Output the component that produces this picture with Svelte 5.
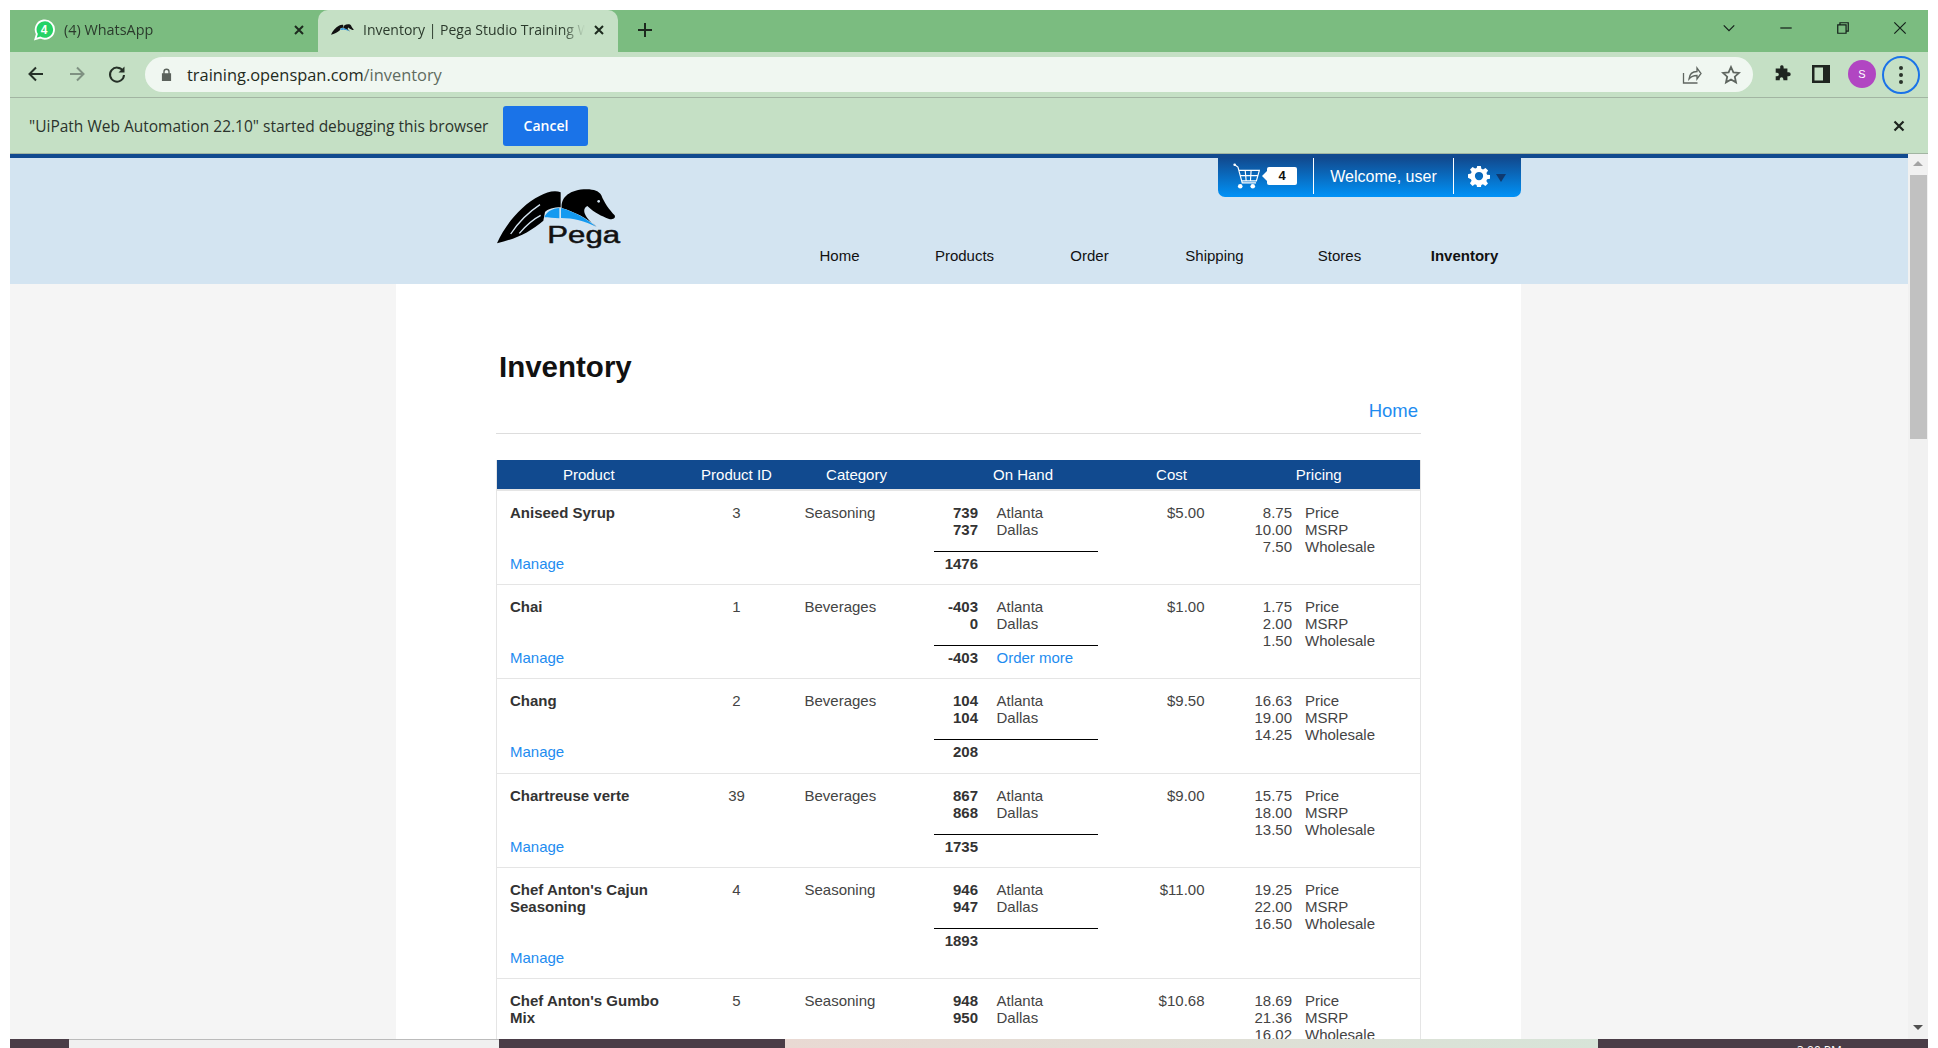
<script>
  const products = [
    { name: 'Aniseed Syrup', id: 3, category: 'Seasoning', atlanta: '739', dallas: '737', total: '1476', cost: '$5.00', price: '8.75', msrp: '10.00', wholesale: '7.50' },
    { name: 'Chai', id: 1, category: 'Beverages', atlanta: '-403', dallas: '0', total: '-403', reorder: true, cost: '$1.00', price: '1.75', msrp: '2.00', wholesale: '1.50' },
    { name: 'Chang', id: 2, category: 'Beverages', atlanta: '104', dallas: '104', total: '208', cost: '$9.50', price: '16.63', msrp: '19.00', wholesale: '14.25' },
    { name: 'Chartreuse verte', id: 39, category: 'Beverages', atlanta: '867', dallas: '868', total: '1735', cost: '$9.00', price: '15.75', msrp: '18.00', wholesale: '13.50' },
    { name: "Chef Anton's Cajun Seasoning", id: 4, category: 'Seasoning', atlanta: '946', dallas: '947', total: '1893', cost: '$11.00', price: '19.25', msrp: '22.00', wholesale: '16.50' },
    { name: "Chef Anton's Gumbo Mix", id: 5, category: 'Seasoning', atlanta: '948', dallas: '950', total: '1898', cost: '$10.68', price: '18.69', msrp: '21.36', wholesale: '16.02' }
  ];

  const navItems = ['Home', 'Products', 'Order', 'Shipping', 'Stores', 'Inventory'];
  const headings = ['Product', 'Product ID', 'Category', 'On Hand', 'Cost', 'Pricing'];

  // same pegasus shapes for the favicon and the page logo
  const wing = 'M21 178C45 125 90 65 150 35C170 24 195 17 212 25V70C192 70 172 76 165 84L160 110C120 145 75 165 21 178z';
  const head = 'M215 72C212 40 240 16 290 16C312 16 328 22 334 34C342 55 358 78 374 94C378 104 368 108 355 104C335 96 315 88 292 66C272 76 286 104 320 128C290 102 255 84 215 72z';
  const blue = 'M163 100C168 84 188 73 208 72V103C190 102 176 100 163 100zM213 72C255 84 290 104 318 128C285 112 250 102 213 102z';
</script>

<div class="window">
  <div class="tabstrip">
    <div class="tab">
      <svg class="favicon" viewBox="0 0 24 24">
        <path d="M2.500 22l1.700-5.600A10 10 0 1 1 8 20.200z" fill="#25d366" stroke="#fff" stroke-width="2" />
        <text x="12" y="16.500" class="wa-count">4</text>
      </svg>
      <span class="tab-title">(4) WhatsApp</span>
      <svg class="tab-close" viewBox="0 0 12 12"><path d="M2 2l8 8M10 2l-8 8" /></svg>
    </div>
    <div class="tab active">
      <svg class="favicon" viewBox="21 15 375 180">
        <path d={wing} fill="#111" />
        <path d={head} fill="#111" />
        <path d={blue} fill="#1b8fe8" />
      </svg>
      <span class="tab-title">Inventory | Pega Studio Training Website</span>
      <svg class="tab-close" viewBox="0 0 12 12"><path d="M2 2l8 8M10 2l-8 8" /></svg>
    </div>
    <svg class="new-tab" viewBox="0 0 16 16"><path d="M8 1v14M1 8h14" /></svg>
    <div class="strip-spacer"></div>
    <svg class="win-btn caret" viewBox="0 0 16 16"><path d="M2 5l6 6 6-6" /></svg>
    <svg class="win-btn" viewBox="0 0 16 16"><path d="M1.500 8h13" /></svg>
    <svg class="win-btn" viewBox="0 0 16 16"><path d="M2 4.500h9.500V14H2zM4.500 4.500V2H14v9.500h-2.500" /></svg>
    <svg class="win-btn" viewBox="0 0 16 16"><path d="M1.500 1.500l13 13M14.500 1.500l-13 13" /></svg>
  </div>

  <div class="toolbar">
    <svg class="nav-icon" viewBox="0 0 20 20"><path d="M17 10H4M10 3.500L3.500 10l6.500 6.500" /></svg>
    <svg class="nav-icon dim" viewBox="0 0 20 20"><path d="M3 10h13M10 3.500l6.500 6.500-6.500 6.500" /></svg>
    <svg class="nav-icon reload" viewBox="0 0 20 20"><path d="M16 7a7 7 0 1 0 1 4" /><path class="solid" d="M17.500 2.500v6h-6z" /></svg>
    <div class="omnibox">
      <svg class="lock" viewBox="0 0 12 14"><path d="M2.500 5.500V4a3.500 3.500 0 0 1 7 0v1.500H11V14H1V5.500zM4 5.500h4V4a2 2 0 0 0-4 0z" /></svg>
      <span class="url">training.openspan.com<span class="url-path">/inventory</span></span>
      <div class="strip-spacer"></div>
      <svg class="omni-icon" viewBox="0 0 20 20"><path d="M1.500 8v10h14M7 14c.5-5 4-7.500 8-7.500V3l4 5.500-4 5.500v-3.500c-3 0-6 1-8 3.500z" /></svg>
      <svg class="omni-icon star" viewBox="0 0 20 20"><path d="M10 2l2.400 5.300 5.600.6-4.200 3.800 1.200 5.700-5-2.900-5 2.900 1.200-5.700L2 7.900l5.600-.6z" /></svg>
    </div>
    <svg class="tool-icon puzzle" viewBox="0 0 20 20"><path d="M8 1.500a2 2 0 0 1 3.800.8V4h4.200v4h1.500a2.200 2.200 0 0 1 0 4.400H16V17h-4.500v-1.500a2 2 0 0 0-4 0V17H3v-4.500h1.500a2 2 0 0 0 0-4H3V4h5z" /></svg>
    <svg class="tool-icon panel" viewBox="0 0 18 18"><path fill-rule="evenodd" d="M0 0h18v18H0zM2.500 2.500v13H11v-13z" /></svg>
    <div class="avatar">S</div>
    <div class="menu-ring"><i></i><i></i><i></i></div>
  </div>

  <div class="infobar">
    <span class="info-text">"UiPath Web Automation 22.10" started debugging this browser</span>
    <button class="cancel">Cancel</button>
    <div class="strip-spacer"></div>
    <svg class="info-close" viewBox="0 0 12 12"><path d="M1.500 1.500l9 9M10.500 1.500l-9 9" /></svg>
  </div>

  <div class="viewport">
    <div class="page">
      <header class="site-header">
        <div class="header-inner">
          <svg class="logo" viewBox="21 15 375 180">
            <path d={wing} fill="#000" />
            <path d="M62 150C85 115 115 85 150 62M88 148C105 128 125 108 152 94" fill="none" stroke="#d3e4f1" stroke-width="4" />
            <path d={head} fill="#000" />
            <circle cx="326" cy="52" r="4" fill="#d3e4f1" />
            <path d={blue} fill="#149af0" />
            <text x="172" y="178" class="logo-text" textLength="218" lengthAdjust="spacingAndGlyphs">Pega</text>
          </svg>
          <div class="header-right">
            <div class="user-pill">
              <div class="pill-cell cart">
                <svg class="cart-icon" viewBox="25 18 82 78">
                  <path d="M30 23l10 7 13 48h42M43 40h62l-9 32H51M62 40l3 32M80 40l-2 32M47 56h54" />
                  <circle cx="47" cy="88" r="7" /><circle cx="85" cy="88" r="7" />
                  <circle cx="30" cy="23" r="4" />
                </svg>
                <span class="cart-badge">4</span>
              </div>
              <div class="pill-cell welcome">Welcome, user</div>
              <div class="pill-cell settings">
                <svg class="gear" viewBox="0 0 24 24"><path fill-rule="evenodd" d="M10 1h4l.6 3.200 1.800.8 2.700-1.800 2.800 2.800-1.800 2.700.7 1.800 3.200.5v4l-3.200.6-.8 1.800 1.800 2.700-2.800 2.800-2.700-1.800-1.800.7-.5 3.200h-4l-.6-3.200-1.800-.8-2.700 1.800-2.800-2.800 1.800-2.700-.7-1.800L0 14v-4l3.200-.6.800-1.800-1.800-2.700 2.800-2.800 2.700 1.800 1.800-.7zM12 7.500a4.500 4.500 0 1 0 0 9 4.500 4.500 0 0 0 0-9z" /></svg>
                <span class="gear-caret"></span>
              </div>
            </div>
            <nav class="site-nav">
              {#each navItems as item}
                <span class="nav-link" class:current={item === 'Inventory'}>{item}</span>
              {/each}
            </nav>
          </div>
        </div>
      </header>

      <main class="content">
        <h1>Inventory</h1>
        <div class="crumb"><span class="link">Home</span></div>
        <table class="inventory">
          <colgroup>
            <col class="c-product" /><col class="c-id" /><col class="c-cat" /><col class="c-hand" /><col class="c-cost" /><col />
          </colgroup>
          <thead>
            <tr>
              {#each headings as heading}
                <th>{heading}</th>
              {/each}
            </tr>
          </thead>
          <tbody>
            {#each products as p}
              <tr>
                <td class="product">
                  <div class="name">{p.name}</div>
                  <div class="manage link">Manage</div>
                </td>
                <td class="center">{p.id}</td>
                <td class="category">{p.category}</td>
                <td class="onhand">
                  <div class="stock">
                    <b>{p.atlanta}</b><span>Atlanta</span>
                    <b>{p.dallas}</b><span>Dallas</span>
                    <div class="sum-rule"></div>
                    <b>{p.total}</b>
                    {#if p.reorder}<span class="link">Order more</span>{:else}<span></span>{/if}
                  </div>
                </td>
                <td class="cost">{p.cost}</td>
                <td class="pricing">
                  <div class="prices">
                    <span class="num">{p.price}</span><span>Price</span>
                    <span class="num">{p.msrp}</span><span>MSRP</span>
                    <span class="num">{p.wholesale}</span><span>Wholesale</span>
                  </div>
                </td>
              </tr>
            {/each}
          </tbody>
        </table>
      </main>
    </div>
    <div class="scrollbar">
      <span class="arrow up"></span>
      <div class="thumb"></div>
      <span class="arrow down"></span>
    </div>
  </div>

  <div class="taskbar">
    <div class="seg dark start"></div>
    <div class="seg light"></div>
    <div class="seg dark mid"></div>
    <div class="seg wallpaper"></div>
    <div class="seg dark tray"><span class="clock">3:00 PM</span></div>
  </div>
</div>

<style>
  :global(body) {
    margin: 0;
    background: #fff;
    overflow: hidden;
  }

  .window {
    box-sizing: border-box;
    width: 1918px;
    height: 1048px;
    margin: 10px 10px 0;
    display: flex;
    flex-direction: column;
    font-family: 'Open Sans', sans-serif;
    overflow: hidden;
  }

  .strip-spacer {
    flex: 1;
  }

  /* browser chrome */
  .tabstrip {
    height: 42px;
    background: #7bbc80;
    display: flex;
    align-items: center;
    flex-shrink: 0;
  }

  .tab {
    box-sizing: border-box;
    width: 308px;
    height: 42px;
    padding: 0 13px 3px 23px;
    display: flex;
    align-items: center;
    color: #2b3a2c;
    font-size: 14.400px;
  }

  .tab.active {
    width: 300px;
    padding-left: 13px;
    background: #c5e0c5;
    border-radius: 10px 10px 0 0;
    font-size: 14px;
  }

  .favicon {
    width: 22px;
    height: 22px;
    flex-shrink: 0;
  }

  .tab.active .favicon {
    height: 14px;
    width: 24px;
  }

  .wa-count {
    font: bold 13px 'Liberation Sans', sans-serif;
    fill: #fff;
    text-anchor: middle;
  }

  .tab-title {
    flex: 1;
    margin-left: 9px;
    white-space: nowrap;
    overflow: hidden;
    -webkit-mask-image: linear-gradient(90deg, #000 90%, transparent);
    mask-image: linear-gradient(90deg, #000 90%, transparent);
  }

  .tab.active .tab-title {
    margin-left: 8px;
  }

  .tab-close {
    width: 12px;
    height: 12px;
    margin-left: 8px;
    fill: none;
    stroke: #1d2a1e;
    stroke-width: 2;
  }

  .new-tab {
    width: 16px;
    height: 16px;
    margin: 0 0 3px 19px;
    fill: none;
    stroke: #1d2a1e;
    stroke-width: 2;
  }

  .win-btn {
    width: 14px;
    height: 14px;
    margin-right: 43px;
    fill: none;
    stroke: #14201a;
    stroke-width: 1.400;
    margin-bottom: 6px;
  }

  .win-btn:last-child {
    margin-right: 21px;
  }

  .toolbar {
    height: 46px;
    box-sizing: border-box;
    background: #c5e0c5;
    border-bottom: 1px solid #a2b5a2;
    padding: 5px 0 5px 16px;
    display: flex;
    align-items: flex-start;
    flex-shrink: 0;
  }

  .toolbar > * {
    flex-shrink: 0;
  }

  .nav-icon {
    width: 20px;
    height: 20px;
    margin: 7px 21px 0 0;
    fill: none;
    stroke: #253027;
    stroke-width: 2;
  }

  .nav-icon.dim {
    stroke: #7f9182;
    margin-right: 20px;
  }

  .nav-icon.reload {
    margin-right: 22px;
  }

  .nav-icon .solid {
    fill: #253027;
    stroke: none;
  }

  .omnibox {
    width: 1608px;
    height: 35px;
    margin-left: -4px;
    padding: 0 6px 0 16px;
    box-sizing: border-box;
    background: #f0f7f1;
    border-radius: 18px;
    display: flex;
    align-items: center;
  }

  .lock {
    width: 11px;
    height: 13px;
    fill: #5b625c;
  }

  .url {
    margin-left: 15px;
    font-size: 16.400px;
    color: #1f2a20;
  }

  .url-path {
    color: #5f6b60;
  }

  .omni-icon {
    width: 20px;
    height: 20px;
    margin-right: 19px;
    fill: none;
    stroke: #5f6660;
    stroke-width: 1.300;
  }

  .omni-icon.star {
    stroke-width: 1.800;
    margin-right: 6px;
  }

  .tool-icon {
    width: 18px;
    height: 18px;
    margin: 8px 0 0 20px;
    fill: #1f2520;
  }

  .tool-icon.puzzle {
    margin-left: 20px;
  }

  .tool-icon.panel {
    margin-left: 21px;
  }

  .avatar {
    width: 28px;
    height: 28px;
    margin: 3px 0 0 18px;
    border-radius: 50%;
    background: #b146c2;
    color: #fff;
    font: 11px/28px 'Liberation Sans', sans-serif;
    text-align: center;
  }

  .menu-ring {
    box-sizing: border-box;
    width: 38px;
    height: 38px;
    margin: -1px 0 0 6px;
    border: 2px solid #1a73e8;
    border-radius: 50%;
    display: flex;
    flex-direction: column;
    align-items: center;
    justify-content: center;
    gap: 3px;
  }

  .menu-ring i {
    width: 4px;
    height: 4px;
    border-radius: 50%;
    background: #2a332b;
  }

  .infobar {
    height: 56px;
    box-sizing: border-box;
    background: #c5e0c5;
    border-bottom: 1px solid #a2b5a2;
    padding: 0 23px 0 19px;
    display: flex;
    align-items: center;
    flex-shrink: 0;
  }

  .info-text {
    font-size: 15.500px;
    color: #2b332c;
  }

  .cancel {
    width: 85px;
    height: 40px;
    margin-left: 15px;
    border: 0;
    border-radius: 3px;
    background: #1a73e8;
    color: #fff;
    font: 600 14px 'Open Sans', sans-serif;
  }

  .info-close {
    width: 12px;
    height: 12px;
    fill: none;
    stroke: #1d241e;
    stroke-width: 2.200;
  }

  /* page */
  .viewport {
    flex: 1;
    min-height: 0;
    display: flex;
    overflow: hidden;
  }

  .page {
    flex: 1;
    min-width: 0;
    background: #f5f5f5;
    font: 15px/17px 'Liberation Sans', Arial, sans-serif;
    color: #444;
    overflow: hidden;
  }

  .site-header {
    height: 126px;
    background: #d3e4f1;
    border-top: 4px solid #114a8f;
  }

  .header-inner {
    width: 1125px;
    margin-left: 386px;
    padding-left: 101px;
    box-sizing: border-box;
    display: flex;
    justify-content: space-between;
  }

  .logo {
    width: 125px;
    height: 60px;
    margin-top: 31px;
  }

  .logo-text {
    font: 70px 'Liberation Sans', sans-serif;
    fill: #111;
    stroke: #111;
    stroke-width: 1.500;
  }

  .header-right {
    display: flex;
    flex-direction: column;
    align-items: flex-end;
  }

  .user-pill {
    height: 39px;
    padding-bottom: 3px;
    box-sizing: border-box;
    background: linear-gradient(#114a8f, #0092f7);
    border-radius: 0 0 7px 7px;
    display: flex;
    align-items: stretch;
    color: #fff;
  }

  .pill-cell {
    display: flex;
    align-items: center;
  }

  .pill-cell + .pill-cell {
    border-left: 1px solid #fff;
  }

  .cart {
    width: 95px;
    padding-left: 15px;
    box-sizing: border-box;
  }

  .cart-icon {
    width: 27px;
    height: 26px;
    fill: none;
    stroke: #fff;
    stroke-width: 3.500;
  }

  .cart-icon circle {
    fill: #fff;
    stroke: none;
  }

  .cart-badge {
    position: relative;
    width: 30px;
    margin-left: 7px;
    background: #fff;
    border-radius: 2px;
    color: #111;
    font: bold 13px/18px 'Liberation Sans', sans-serif;
    text-align: center;
  }

  .cart-badge::before {
    content: '';
    position: absolute;
    left: -5px;
    top: 4px;
    border: 5px solid transparent;
    border-left: 0;
    border-right-color: #fff;
  }

  .welcome {
    width: 140px;
    box-sizing: border-box;
    justify-content: center;
    font-size: 16px;
  }

  .settings {
    width: 68px;
    box-sizing: border-box;
    padding-left: 14px;
  }

  .gear {
    width: 22px;
    height: 22px;
    fill: #fff;
  }

  .gear-caret {
    margin: 3px 0 0 6px;
    border: 5px solid transparent;
    border-bottom: 0;
    border-top: 8px solid #0f3a70;
  }

  .site-nav {
    margin-top: 50px;
    width: 750px;
    margin-right: -6px;
    display: grid;
    grid-template-columns: repeat(6, 125px);
    text-align: center;
    color: #111;
  }

  .nav-link.current {
    font-weight: bold;
  }

  .content {
    width: 1125px;
    height: 760px;
    margin-left: 386px;
    padding: 67px 100px 0;
    box-sizing: border-box;
    background: #fff;
    overflow: hidden;
  }

  h1 {
    margin: 0;
    padding-left: 3px;
    font-size: 29.500px;
    line-height: 32px;
    color: #111;
  }

  .crumb {
    margin-top: 17px;
    padding: 0 3px 12px 0;
    border-bottom: 1px solid #ddd;
    font-size: 18.500px;
    line-height: 21px;
    text-align: right;
  }

  .link {
    color: #1e8cf0;
  }

  .inventory {
    width: 925px;
    margin-top: 26px;
    table-layout: fixed;
    border-collapse: collapse;
    border-left: 1px solid #e5e5e5;
    border-right: 1px solid #e5e5e5;
  }

  .c-product { width: 184px; }
  .c-id { width: 112px; }
  .c-cat { width: 128px; }
  .c-hand { width: 205px; }
  .c-cost { width: 92px; }

  th {
    height: 29px;
    padding: 0;
    background: #114a8f;
    border-bottom: 2px solid #e5e5e5;
    color: #fff;
    font-weight: normal;
  }

  td {
    padding: 13px 0 12.200px;
    vertical-align: top;
    border-bottom: 1px solid #e5e5e5;
  }

  td.product {
    padding-left: 13px;
    padding-right: 10px;
  }

  .name {
    font-weight: bold;
    color: #333;
  }

  .manage {
    margin-top: 34px;
  }

  td.center {
    text-align: center;
  }

  td.category {
    padding-left: 12px;
  }

  .stock {
    display: grid;
    grid-template-columns: 57.500px 1fr;
    column-gap: 18.500px;
  }

  .stock b {
    text-align: right;
    color: #333;
  }

  .sum-rule {
    grid-column: 1 / -1;
    width: 164px;
    margin: 13px 0 3px 13px;
    border-top: 1px solid #000;
  }

  td.cost {
    padding-right: 13px;
    text-align: right;
  }

  .prices {
    display: grid;
    grid-template-columns: 74.500px 1fr;
    column-gap: 13px;
  }

  .num {
    text-align: right;
  }

  /* scrollbar */
  .scrollbar {
    width: 20px;
    background: #f1f1f1;
    position: relative;
    flex-shrink: 0;
  }

  .thumb {
    width: 17px;
    height: 264px;
    margin: 21px 0 0 2px;
    background: #c1c1c1;
  }

  .arrow {
    position: absolute;
    left: 5px;
    border: 5px solid transparent;
  }

  .arrow.up {
    top: 7px;
    border-top: 0;
    border-bottom: 5px solid #a3a3a3;
  }

  .arrow.down {
    bottom: 9px;
    border-bottom: 0;
    border-top: 5px solid #505050;
  }

  /* os taskbar, almost off screen */
  .taskbar {
    height: 9px;
    margin-bottom: 10px;
    display: flex;
    flex-shrink: 0;
  }

  .seg {
    height: 9px;
  }

  .dark {
    background: #4a3d47;
  }

  .start {
    width: 59px;
  }

  .light {
    width: 430px;
    box-sizing: border-box;
    background: #f0f0f0;
    border-top: 1px solid #bbb;
  }

  .mid {
    width: 286px;
  }

  .wallpaper {
    flex: 1;
    background: linear-gradient(90deg, #e9d9d3, #d7e4d8);
  }

  .tray {
    width: 330px;
    overflow: hidden;
    padding-left: 199px;
    box-sizing: border-box;
  }

  .clock {
    display: block;
    margin-top: 5px;
    color: #fff;
    font: 12px/14px 'Open Sans', sans-serif;
  }
</style>
